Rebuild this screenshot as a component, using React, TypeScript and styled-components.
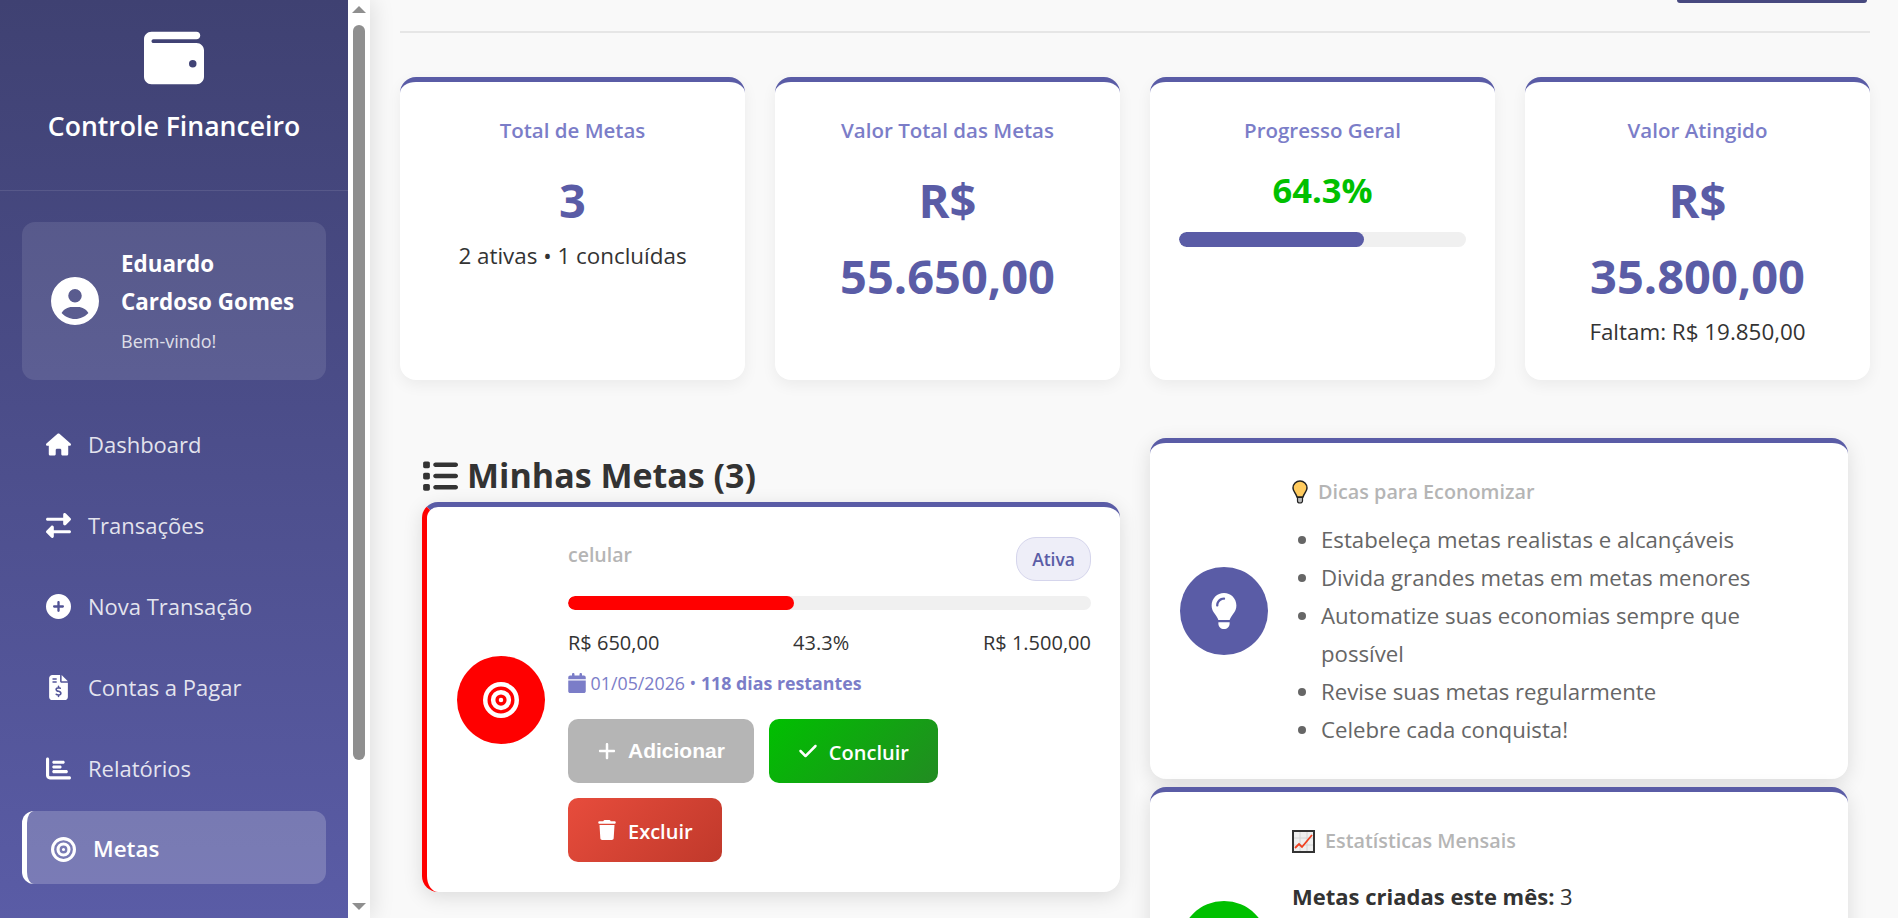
import React from "react";
import styled, { createGlobalStyle } from "styled-components";
import {
    FaBullseye,
    FaCalendar,
    FaChartBar,
    FaCheck,
    FaCirclePlus,
    FaCircleUser,
    FaFileInvoiceDollar,
    FaHouse,
    FaLightbulb,
    FaList,
    FaPlus,
    FaRightLeft,
    FaTrash,
    FaWallet,
} from "react-icons/fa6";

const FONT = `"Open Sans", "Noto Sans", sans-serif`;
const PRIMARY = "#5a5ca6";
const PRIMARY_DARK = "#3f4172";
const LIGHT = "#7b7dc8";

const GlobalStyle = createGlobalStyle`
    * {
        box-sizing: border-box;
    }

    html,
    body {
        margin: 0;
        height: 100%;
        overflow: hidden;
    }

    body {
        font-family: ${FONT};
        background: #f9f9f9;
        color: #333;
        line-height: 1.7;
    }
`;

const navItems = [
    { label: "Dashboard", icon: <FaHouse /> },
    { label: "Transações", icon: <FaRightLeft /> },
    { label: "Nova Transação", icon: <FaCirclePlus /> },
    { label: "Contas a Pagar", icon: <FaFileInvoiceDollar /> },
    { label: "Relatórios", icon: <FaChartBar /> },
    { label: "Metas", icon: <FaBullseye />, active: true },
];

const tips = [
    "Estabeleça metas realistas e alcançáveis",
    "Divida grandes metas em metas menores",
    "Automatize suas economias sempre que possível",
    "Revise suas metas regularmente",
    "Celebre cada conquista!",
];

const BulbEmoji = () => (
    <svg width="16" height="24" viewBox="0 0 16 24" aria-hidden="true">
        <path
            d="M8 1a7 7 0 0 0-7 7c0 3.4 3 5.4 4 9h6c1-3.6 4-5.6 4-9a7 7 0 0 0-7-7z"
            fill="#ffcb5e"
            stroke="#222"
            strokeWidth="1.5"
        />
        <path d="M5.5 17.5h5v3.5a2.5 2 0 0 1-5 0z" fill="#bbb" stroke="#222" strokeWidth="1.2" />
    </svg>
);

const ChartEmoji = () => (
    <svg width="23" height="23" viewBox="0 0 23 23" aria-hidden="true">
        <rect x="1" y="1" width="21" height="21" fill="#efefef" stroke="#333" strokeWidth="2" />
        <path d="M2 8h19M2 15h19M8 2v19M15 2v19" stroke="#d4d4d4" strokeWidth="1" />
        <path d="M3 18l4-4 3 3 10-12" fill="none" stroke="#f0401f" strokeWidth="1.8" />
    </svg>
);

export default function App() {
    return (
        <>
            <GlobalStyle />
            <Layout>
                <Sidebar>
                    <SidebarBody>
                        <Brand>
                            <FaWallet />
                            <BrandName>Controle Financeiro</BrandName>
                        </Brand>
                        <UserCard>
                            <Avatar>
                                <FaCircleUser />
                            </Avatar>
                            <div>
                                <UserName>Eduardo Cardoso Gomes</UserName>
                                <Welcome>Bem-vindo!</Welcome>
                            </div>
                        </UserCard>
                        <Nav>
                            {navItems.map(item => (
                                <NavItem key={item.label} $active={item.active}>
                                    <NavIcon>{item.icon}</NavIcon>
                                    {item.label}
                                </NavItem>
                            ))}
                        </Nav>
                    </SidebarBody>
                    <ScrollRail>
                        <ArrowUp />
                        <Thumb />
                        <ArrowDown />
                    </ScrollRail>
                </Sidebar>

                <Main>
                    <TopBar>
                        <HeaderButton />
                    </TopBar>

                    <Stats>
                        <StatCard>
                            <StatTitle>Total de Metas</StatTitle>
                            <StatValue>3</StatValue>
                            <StatNote>2 ativas • 1 concluídas</StatNote>
                        </StatCard>
                        <StatCard>
                            <StatTitle>Valor Total das Metas</StatTitle>
                            <StatValue>R$ 55.650,00</StatValue>
                        </StatCard>
                        <StatCard>
                            <StatTitle>Progresso Geral</StatTitle>
                            <Percent>64.3%</Percent>
                            <Track $height={15}>
                                <Fill $color={PRIMARY} style={{ width: "64.3%" }} />
                            </Track>
                        </StatCard>
                        <StatCard>
                            <StatTitle>Valor Atingido</StatTitle>
                            <StatValue>R$ 35.800,00</StatValue>
                            <StatNote>Faltam: R$ 19.850,00</StatNote>
                        </StatCard>
                    </Stats>

                    <Columns>
                        <GoalsColumn>
                            <SectionTitle>
                                <FaList />
                                Minhas Metas (3)
                            </SectionTitle>
                            <GoalCard>
                                <Circle $color="#ff0000">
                                    <FaBullseye />
                                </Circle>
                                <GoalBody>
                                    <GoalHead>
                                        <GoalName>celular</GoalName>
                                        <Badge>Ativa</Badge>
                                    </GoalHead>
                                    <Track $height={14}>
                                        <Fill $color="#ff0000" style={{ width: "43.3%" }} />
                                    </Track>
                                    <Amounts>
                                        <span>R$ 650,00</span>
                                        <span>43.3%</span>
                                        <span>R$ 1.500,00</span>
                                    </Amounts>
                                    <DateLine>
                                        <FaCalendar /> 01/05/2026 • <strong>118 dias restantes</strong>
                                    </DateLine>
                                    <Actions>
                                        <ActionButton $background="#b5b5b5">
                                            <FaPlus />
                                            <ButtonLabel $disabled>Adicionar</ButtonLabel>
                                        </ActionButton>
                                        <ActionButton $background="linear-gradient(135deg, #00c000, #228b22)">
                                            <FaCheck />
                                            <ButtonLabel>Concluir</ButtonLabel>
                                        </ActionButton>
                                        <ActionButton $background="linear-gradient(135deg, #e74c3c, #c0392b)">
                                            <FaTrash />
                                            <ButtonLabel>Excluir</ButtonLabel>
                                        </ActionButton>
                                    </Actions>
                                </GoalBody>
                            </GoalCard>
                        </GoalsColumn>

                        <SideColumn>
                            <InfoCard>
                                <Circle $color={PRIMARY}>
                                    <FaLightbulb />
                                </Circle>
                                <InfoBody>
                                    <InfoTitle>
                                        <BulbEmoji /> Dicas para Economizar
                                    </InfoTitle>
                                    <TipList>
                                        {tips.map(tip => (
                                            <li key={tip}>{tip}</li>
                                        ))}
                                    </TipList>
                                </InfoBody>
                            </InfoCard>
                            <InfoCard $minHeight={311}>
                                <Circle $color="#00c000">
                                    <FaChartBar />
                                </Circle>
                                <InfoBody>
                                    <InfoTitle>
                                        <ChartEmoji /> Estatísticas Mensais
                                    </InfoTitle>
                                    <StatLine>
                                        <strong>Metas criadas este mês:</strong> 3
                                    </StatLine>
                                </InfoBody>
                            </InfoCard>
                        </SideColumn>
                    </Columns>
                </Main>
            </Layout>
        </>
    );
}

const Layout = styled.div`
    display: flex;
    height: 918px;
    overflow: hidden;
`;

const Sidebar = styled.aside`
    flex: 0 0 370px;
    display: flex;
    height: 100%;
    box-shadow: 4px 0 20px rgba(0, 0, 0, 0.1);
    z-index: 1;
`;

const SidebarBody = styled.div`
    flex: 1;
    background: linear-gradient(180deg, ${PRIMARY_DARK}, ${PRIMARY});
    color: #fff;
`;

const ScrollRail = styled.div`
    flex: 0 0 22px;
    display: flex;
    flex-direction: column;
    align-items: center;
    padding: 6px 0 8px;
    background: #fff;
`;

const ArrowUp = styled.div`
    border: 7px solid transparent;
    border-top: 0;
    border-bottom-color: #8f8f8f;
`;

const ArrowDown = styled.div`
    border: 7px solid transparent;
    border-bottom: 0;
    border-top-color: #8f8f8f;
    margin-top: auto;
`;

const Thumb = styled.div`
    width: 12px;
    height: 735px;
    margin-top: 12px;
    border-radius: 6px;
    background: #8f8f8f;
`;

const Brand = styled.div`
    height: 191px;
    padding-top: 28px;
    text-align: center;
    border-bottom: 1px solid rgba(255, 255, 255, 0.1);

    svg {
        display: block;
        width: 60px;
        height: 60px;
        margin: 0 auto;
    }
`;

const BrandName = styled.div`
    margin-top: 18px;
    font-size: 26.6px;
    font-weight: 600;
    line-height: 40px;
`;

const UserCard = styled.div`
    display: flex;
    align-items: center;
    gap: 22px;
    height: 158px;
    margin: 31px 22px 0;
    padding: 0 29px;
    background: rgba(255, 255, 255, 0.1);
    border-radius: 13px;
`;

const Avatar = styled.div`
    flex: 0 0 48px;
    height: 48px;

    svg {
        display: block;
        width: 48px;
        height: 48px;
    }
`;

const UserName = styled.div`
    margin-top: -2px;
    font-size: 22.4px;
    font-weight: 700;
    line-height: 38px;
`;

const Welcome = styled.div`
    margin-top: 5px;
    font-size: 18px;
    line-height: 30px;
    opacity: 0.8;
`;

const Nav = styled.nav`
    display: flex;
    flex-direction: column;
    gap: 8px;
    margin: 26px 22px 0;
`;

const NavItem = styled.a<{ $active?: boolean }>`
    display: flex;
    align-items: center;
    height: 73px;
    padding: 4px 0 0 24px;
    border-radius: 12px;
    font-size: 22px;
    color: rgba(255, 255, 255, 0.85);

    ${props =>
        props.$active &&
        `
        padding-top: 3px;
        border-left: 5px solid #fff;
        background: rgba(255, 255, 255, 0.2);
        color: #fff;
        font-size: 22.4px;
        font-weight: 600;
    `}
`;

const NavIcon = styled.span`
    display: flex;
    justify-content: center;
    width: 25px;
    margin-right: 17px;
    color: #fff;

    svg {
        width: 25px;
        height: 25px;
    }
`;

const Main = styled.main`
    flex: 1;
    min-width: 0;
    padding: 0 28px 0 30px;
`;

const TopBar = styled.div`
    display: flex;
    justify-content: flex-end;
    height: 33px;
    border-bottom: 2px solid #e6e6e6;
`;

const HeaderButton = styled.div`
    width: 190px;
    height: 3px;
    margin-right: 3px;
    border-radius: 0 0 6px 6px;
    background: #47497f;
`;

const Stats = styled.section`
    display: grid;
    grid-template-columns: repeat(4, 345px);
    gap: 30px;
    margin-top: 44px;
`;

const Card = styled.div`
    background: #fff;
    border-top: 5px solid ${PRIMARY};
    border-radius: 16px;
    box-shadow: 0 5px 15px rgba(0, 0, 0, 0.06);
`;

const StatCard = styled(Card)`
    height: 303px;
    padding: 30px 29px;
    text-align: center;
`;

const StatTitle = styled.div`
    font-size: 20.5px;
    font-weight: 600;
    line-height: 36px;
    color: ${LIGHT};
`;

const StatValue = styled.div`
    margin-top: 14px;
    padding: 0 10px;
    font-size: 47px;
    font-weight: 700;
    line-height: 76px;
    color: ${PRIMARY};
`;

const StatNote = styled.div`
    font-size: 22.4px;
    line-height: 36px;
`;

const Percent = styled.div`
    margin-top: 14px;
    font-size: 34.5px;
    font-weight: 700;
    line-height: 56px;
    color: #00c000;
`;

const Track = styled.div<{ $height: number }>`
    height: ${props => props.$height}px;
    margin-top: 14px;
    border-radius: 10px;
    background: #f0f0f0;
    overflow: hidden;
`;

const Fill = styled.div<{ $color: string }>`
    height: 100%;
    border-radius: 10px;
    background: ${props => props.$color};
`;

const Columns = styled.section`
    display: grid;
    grid-template-columns: 720px 698px;
    gap: 30px;
    margin-top: 58px;
`;

const GoalsColumn = styled.div`
    padding: 16px 0 0 22px;
`;

const SideColumn = styled.div`
    display: flex;
    flex-direction: column;
    gap: 8px;
`;

const SectionTitle = styled.h2`
    display: flex;
    align-items: center;
    gap: 9px;
    margin: 0 0 5px;
    font-size: 34px;
    font-weight: 700;
    line-height: 43px;
    color: #333;

    svg {
        width: 36px;
        height: 36px;
    }
`;

const GoalCard = styled(Card)`
    display: flex;
    align-items: center;
    gap: 23px;
    padding: 30px 29px 30px 30px;
    border-left: 5px solid #ff0000;
    box-shadow: 0 5px 20px rgba(0, 0, 0, 0.12);
`;

const Circle = styled.div<{ $color: string }>`
    flex: 0 0 88px;
    display: flex;
    align-items: center;
    justify-content: center;
    height: 88px;
    border-radius: 50%;
    background: ${props => props.$color};
    color: #fff;

    svg {
        width: 36px;
        height: 36px;
    }
`;

const GoalBody = styled.div`
    flex: 1;
    min-width: 0;
`;

const GoalHead = styled.div`
    display: flex;
    align-items: flex-start;
    justify-content: space-between;
    height: 45px;
`;

const GoalName = styled.div`
    font-size: 19.5px;
    font-weight: 600;
    line-height: 36px;
    color: #b5b5b5;
`;

const Badge = styled.span`
    height: 44px;
    padding: 0 15px;
    border: 1px solid #d5d5ec;
    border-radius: 20px;
    background: #eeeef8;
    font-size: 17.5px;
    font-weight: 600;
    line-height: 42px;
    color: ${PRIMARY};
`;

const Amounts = styled.div`
    display: flex;
    justify-content: space-between;
    margin-top: 18px;
    font-size: 20px;
    line-height: 30px;
`;

const DateLine = styled.div`
    margin-top: 10px;
    font-size: 17.8px;
    line-height: 30px;
    color: ${LIGHT};

    svg {
        width: 18px;
        height: 20px;
        vertical-align: -3px;
    }
`;

const Actions = styled.div`
    display: flex;
    flex-wrap: wrap;
    gap: 15px;
    margin-top: 21px;
`;

const ActionButton = styled.button<{ $background: string }>`
    display: flex;
    align-items: center;
    gap: 11px;
    height: 64px;
    padding: 0 29px;
    border: 0;
    border-radius: 10px;
    background: ${props => props.$background};
    color: #fff;

    svg {
        width: 20px;
        height: 20px;
    }
`;

const ButtonLabel = styled.span<{ $disabled?: boolean }>`
    padding-top: ${props => (props.$disabled ? 0 : 3)}px;
    font-family: ${props => (props.$disabled ? `"Liberation Sans", sans-serif` : FONT)};
    font-size: ${props => (props.$disabled ? 21 : 20)}px;
    font-weight: ${props => (props.$disabled ? 700 : 600)};
`;

const InfoCard = styled(Card)<{ $minHeight?: number }>`
    display: flex;
    align-items: center;
    gap: 24px;
    min-height: ${props => props.$minHeight ?? 0}px;
    padding: 30px;
    box-shadow: 0 5px 20px rgba(0, 0, 0, 0.12);
`;

const InfoBody = styled.div`
    align-self: flex-start;
    flex: 1;
    min-width: 0;
`;

const InfoTitle = styled.div`
    display: flex;
    align-items: center;
    gap: 10px;
    font-size: 19.8px;
    font-weight: 600;
    line-height: 38px;
    color: #b5b5b5;
`;

const TipList = styled.ul`
    margin: 10px 0 0;
    padding-left: 29px;
    font-size: 22.2px;
    line-height: 38px;
    color: #666;
`;

const StatLine = styled.p`
    margin: 17px 0 0;
    font-size: 22px;
    line-height: 38px;
    color: #333;
`;
